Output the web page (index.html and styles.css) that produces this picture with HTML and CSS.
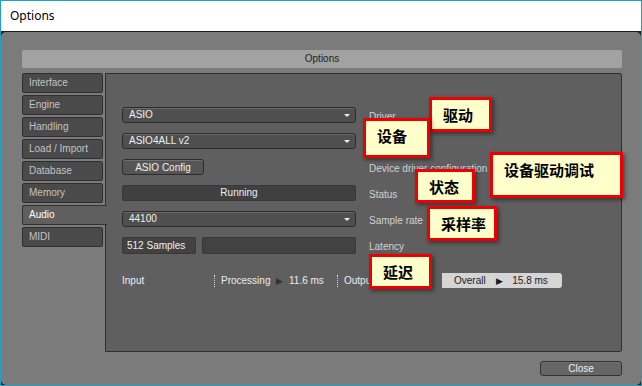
FILE: index.html
```html
<!DOCTYPE html>
<html lang="en">
<head>
    <meta charset="UTF-8">
    <title>Options</title>
    <link rel="stylesheet" href="styles.css">
</head>
<body>
    <div class="window">
        <div class="titlebar">Options</div>
        <div class="frame">
            <div class="frame-head">Options</div>
            <div class="frame-body">
                <ul class="tabs">
                    <li>Interface</li>
                    <li>Engine</li>
                    <li>Handling</li>
                    <li>Load / Import</li>
                    <li>Database</li>
                    <li>Memory</li>
                    <li class="active">Audio</li>
                    <li>MIDI</li>
                </ul>
                <section class="panel">
                    <div class="grid">
                        <div class="select">ASIO<span class="caret"></span></div>
                        <div class="label">Driver</div>

                        <div class="select">ASIO4ALL v2<span class="caret"></span></div>
                        <div class="label"></div>

                        <div><button class="btn">ASIO Config</button></div>
                        <div class="label">Device driver configuration</div>

                        <div class="status">Running</div>
                        <div class="label">Status</div>

                        <div class="select">44100<span class="caret"></span></div>
                        <div class="label">Sample rate</div>

                        <div class="latency">
                            <div class="field small">512 Samples</div>
                            <div class="field"></div>
                        </div>
                        <div class="label">Latency</div>
                    </div>

                    <div class="lat-row">
                        <div class="lat-input">Input</div>
                        <div class="lat-proc">Processing <span class="arrow">&#9654;</span> 11.6 ms</div>
                        <div class="lat-out">Output</div>
                        <div class="overall">Overall <span class="arrow dark">&#9654;</span> 15.8 ms</div>
                    </div>
                </section>
            </div>
            <div class="frame-foot">
                <button class="btn close">Close</button>
            </div>
        </div>
    </div>

    <!-- annotation callouts -->
    <div class="note n-driver">驱动</div>
    <div class="note n-device">设备</div>
    <div class="note n-config">设备驱动调试</div>
    <div class="note n-status">状态</div>
    <div class="note n-rate">采样率</div>
    <div class="note n-latency">延迟</div>
</body>
</html>
```

FILE: styles.css
```css
* {
    box-sizing: border-box;
    margin: 0;
    padding: 0;
}

body {
    font-family: "Liberation Sans", Arial, sans-serif;
    font-size: 10px;
    background-color: #fff;
}

.window {
    width: 642px;
    height: 386px;
    border: 1px solid #1ba2c6;
    background-color: #1c1c1c;
    display: flex;
    flex-direction: column;
}

.titlebar {
    height: 30px;
    background-color: #fff;
    font-family: "Noto Sans", sans-serif;
    font-size: 12px;
    color: #000;
    padding-left: 9px;
    line-height: 30px;
}

.frame {
    flex: 1;
    background-color: #7b7b7b;
    border-radius: 5px;
    margin-top: 1px;
    padding: 18px 19px 8px 21px;
    display: flex;
    flex-direction: column;
}

.frame-head {
    height: 18px;
    background-color: #a2a2a2;
    border-radius: 2px;
    text-align: center;
    line-height: 18px;
    color: #222;
}

.frame-body {
    display: flex;
    margin-top: 5px;
    height: 279px;
}

.tabs {
    list-style: none;
    width: 83px;
    display: flex;
    flex-direction: column;
    gap: 2px;
    position: relative;
    z-index: 1;
}

.tabs li {
    width: 81px;
    height: 20px;
    line-height: 18px;
    padding-left: 6px;
    background-color: #4a4a4a;
    border: 1px solid #2e2e2e;
    border-radius: 2px;
    color: #c4c4c4;
}

.tabs li.active {
    width: 85px;
    background-color: #5f5f5f;
    border-color: #333;
    border-right: none;
    border-radius: 2px 0 0 2px;
    color: #fff;
}

.panel {
    flex: 1;
    background-color: #5f5f5f;
    border: 1px solid #303030;
    border-radius: 0 2px 2px 0;
    padding: 33px 0 0 16px;
}

.grid {
    display: grid;
    grid-template-columns: 234px 1fr;
    grid-auto-rows: 16px;
    row-gap: 10px;
    column-gap: 13px;
    align-items: center;
}

.select {
    position: relative;
    height: 16px;
    line-height: 14px;
    padding-left: 6px;
    background-color: #4f4f4f;
    border: 1px solid #2c2c2c;
    border-radius: 3px;
    box-shadow: inset 0 1px 0 #6a6a6a;
    color: #f0f0f0;
}

.caret {
    position: absolute;
    right: 5px;
    top: 6px;
    border-left: 3px solid transparent;
    border-right: 3px solid transparent;
    border-top: 3px solid #eee;
}

.label {
    color: #d2d2d2;
    padding-top: 3px;
}

.btn {
    font-family: "Liberation Sans", Arial, sans-serif;
    font-size: 10px;
    width: 82px;
    height: 16px;
    background-color: #555;
    border: 1px solid #2c2c2c;
    border-radius: 3px;
    box-shadow: inset 0 1px 0 #707070;
    color: #f0f0f0;
}

.status {
    height: 16px;
    line-height: 14px;
    text-align: center;
    background-color: #404040;
    border: 1px solid #383838;
    border-radius: 2px;
    color: #f0f0f0;
}

.latency {
    display: flex;
    gap: 6px;
    height: 17px;
}

.field {
    flex: 1;
    background-color: #424242;
    border: 1px solid #383838;
    border-radius: 2px;
    line-height: 15px;
    color: #f0f0f0;
}

.field.small {
    flex: none;
    width: 74px;
    padding-left: 4px;
}

.lat-row {
    display: flex;
    align-items: center;
    margin-top: 20px;
    height: 15px;
    color: #ececec;
}

.lat-input {
    width: 92px;
}

.lat-proc,
.lat-out {
    border-left: 1px dotted #ddd;
    padding-left: 6px;
    height: 12px;
    line-height: 12px;
}

.lat-proc {
    width: 123px;
}

.lat-out {
    width: 105px;
}

.arrow {
    font-size: 9px;
    color: #333;
    margin: 0 3px;
}

.arrow.dark {
    color: #1a1a1a;
    margin: 0 6px 0 8px;
}

.overall {
    width: 120px;
    height: 15px;
    line-height: 15px;
    padding-left: 12px;
    background-color: #d5d5d5;
    border-radius: 0 3px 3px 0;
    color: #222;
}

.frame-foot {
    display: flex;
    justify-content: flex-end;
    margin-top: 9px;
}

.close {
    height: 15px;
    width: 82px;
    background-color: #666;
    border-color: #333;
}

.note {
    position: absolute;
    background-color: #ffffcc;
    border: 3px solid #ee0000;
    box-shadow: 2px 2px 4px rgba(0,0,0,0.45);
    font-family: "Noto Sans CJK SC", sans-serif;
    font-size: 15px;
    font-weight: 700;
    line-height: 20px;
    color: #000;
    padding: 5px 0 0 11px;
}

.n-driver { left: 429px; top: 97px; width: 63px; height: 35px; }
.n-device { left: 363px; top: 118px; width: 67px; height: 40px; }
.n-config { left: 490px; top: 152px; width: 133px; height: 46px; }
.n-status { left: 415px; top: 169px; width: 60px; height: 34px; }
.n-rate { left: 427px; top: 206px; width: 70px; height: 35px; }
.n-latency { left: 369px; top: 254px; width: 63px; height: 35px; }
```
